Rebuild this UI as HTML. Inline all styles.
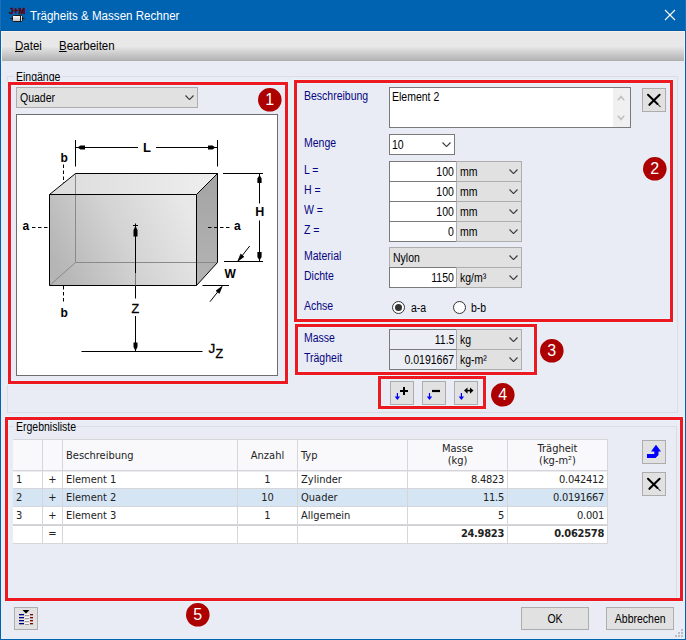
<!DOCTYPE html>
<html><head><meta charset="utf-8">
<title>Trägheits &amp; Massen Rechner</title>
<style>
*{box-sizing:border-box;margin:0;padding:0}
html,body{width:686px;height:640px;overflow:hidden}
body{position:relative;background:#e9ecf4;font-family:"Liberation Sans",sans-serif;font-size:12.5px;color:#000}
.abs{position:absolute}
.s{display:inline-block;white-space:nowrap;transform:scaleX(.84);transform-origin:0 50%}
.sr{display:inline-block;white-space:nowrap;transform:scaleX(.84);transform-origin:100% 50%}
.sc{display:inline-block;white-space:nowrap;transform:scaleX(.84);transform-origin:50% 50%}
#title{left:0;top:0;width:686px;height:31px;background:#0063b1;border-bottom:1px solid #005aa6;border-left:1px solid #1a6fb8;border-right:1px solid #1a6fb8}
#title .t{left:29px;top:8.5px;color:#fff;font-size:12.5px;white-space:nowrap;transform:scaleX(.926);transform-origin:0 50%}
#menu{left:1px;top:31px;width:684px;height:30px;background:linear-gradient(#e8e8e8 0%,#e8e8e8 50%,#e0e0e0 56%,#b4b4b4 97%,#aaaaaa 100%);border:1px solid #f7f3ec;border-bottom:none}
#menu span{position:absolute;top:7px;font-size:12.5px;white-space:nowrap;transform:scaleX(.92);transform-origin:0 50%}
.bl{left:0;top:31px;width:1px;height:609px;background:#0063b1}
.br{left:685px;top:31px;width:1px;height:609px;background:#0063b1}
.bb{left:0;top:639px;width:686px;height:1px;background:#0063b1}
.grp{border:1px solid #dcdde2}
.red{border:3px solid #ed1820;box-shadow:0 0 0 1px rgba(230,247,253,.75),inset 0 0 0 1px rgba(230,247,253,.75)}
.circ{width:23.6px;height:23.6px;border-radius:50%;background:#ad0000;color:#fff;font-size:16px;text-align:center;line-height:24px}
.lbl{color:#050582;white-space:nowrap}
.inp{background:#fff;border:1px solid #7a7a7a;height:21px;text-align:right;line-height:20px;padding-right:2px}
.ro{background:#eceef5}
.cmb{background:#e1e1e1;border:1px solid #adadad;height:21px;line-height:20px;padding-left:3px}
.btn{background:#e1e1e1;border:1px solid #adadad}
.chev{position:absolute;right:3.5px;top:6.9px;width:9px;height:5.5px}
#grid{font-family:"DejaVu Sans Condensed","DejaVu Sans",sans-serif;font-size:11px;color:#222}
#grid .hl{left:0;width:595px;height:1px;background:#d6d6da}
#grid .vl{top:0;width:1px;height:105px;background:#d6d6da}
#grid .c{white-space:nowrap;overflow:hidden}
</style></head><body>
<div id="title" class="abs">
<span class="abs" style="left:7.8px;top:6.3px;font-size:9.8px;font-weight:bold;color:#5a0410;-webkit-text-stroke:0.5px #5a0410;line-height:10px;white-space:nowrap;transform:scaleX(.84);transform-origin:0 0">J+M</span>
<svg class="abs" style="left:8px;top:14px" width="17" height="9" viewBox="9 14 17 9"><path d="M10 18.5 H12 M22.5 18.5 H24.5" stroke="#222" stroke-width="1"/><defs><linearGradient id="mg" x1="0" y1="0" x2="0" y2="1"><stop offset="0" stop-color="#fff"/><stop offset="1" stop-color="#bdbdbd"/></linearGradient></defs><rect x="12.5" y="15.5" width="10" height="6" rx="1" fill="url(#mg)" stroke="#1a1a1a" stroke-width="1"/><path d="M20.5 15.5 V21.5" stroke="#1a1a1a" stroke-width="1"/></svg>
<span class="abs t">Trägheits &amp; Massen Rechner</span>
<svg class="abs" style="left:663px;top:9px" width="12" height="12" viewBox="0 0 12 12"><path d="M1 1 L11 11 M11 1 L1 11" stroke="#fff" stroke-width="1.1" fill="none"/></svg>
</div>
<div id="menu" class="abs"><span style="left:13px"><u>D</u>atei</span><span style="left:57px"><u>B</u>earbeiten</span></div>
<div class="abs bl"></div><div class="abs br"></div><div class="abs bb"></div>
<div class="abs grp" style="left:7px;top:76px;width:671px;height:337px"></div>
<div class="abs" style="left:14px;top:70px;width:48px;height:14px;padding:0 2px;background:#e9ecf4"><span class="s">Eingänge</span></div>
<div class="abs cmb" style="left:16px;top:87px;width:182px;"><span class="s">Quader</span><svg class="chev" viewBox="0 0 9 5.5"><path d="M0.5 0.5 L4.5 4.6 L8.5 0.5" fill="none" stroke="#3c3c3c" stroke-width="1.15"/></svg></div>
<div class="abs" id="dia" style="left:16px;top:114px;width:262px;height:262px;background:#fff;border:1px solid #6e6e6e"></div>
<svg class="abs" style="left:17px;top:115px" width="260" height="260" viewBox="17 115 260 260" font-family="Liberation Sans, sans-serif">
<defs>
<linearGradient id="gf" x1="0" y1="0.65" x2="1" y2="0.35"><stop offset="0" stop-color="#b5b5b5"/><stop offset="0.5" stop-color="#d3d3d3"/><stop offset="1" stop-color="#e8e8e8"/></linearGradient>
<linearGradient id="gt" x1="0" y1="0" x2="1" y2="0"><stop offset="0" stop-color="#dcdcdc"/><stop offset="1" stop-color="#eeeeee"/></linearGradient>
<linearGradient id="gr" x1="0" y1="0" x2="0" y2="1"><stop offset="0" stop-color="#a4a4a4"/><stop offset="1" stop-color="#b4b4b4"/></linearGradient>
</defs>
<!-- box faces -->
<polygon points="49.5,194.5 196.5,194.5 196.5,285.5 49.5,285.5" fill="url(#gf)"/>
<polygon points="49.5,194.5 75.5,173.5 217.5,173.5 196.5,194.5" fill="url(#gt)"/>
<polygon points="196.5,194.5 217.5,173.5 217.5,262.5 196.5,285.5" fill="url(#gr)"/>
<!-- hidden edges -->
<path d="M75.5 173.5 V262.5 H217.5 M75.5 262.5 L49.5 285.5" fill="none" stroke="#8a8a8a" stroke-width="1"/>
<!-- visible edges -->
<path d="M49.5 194.5 H196.5 V285.5 H49.5 Z M49.5 194.5 L75.5 173.5 H217.5 V262.5 L196.5 285.5 M196.5 194.5 L217.5 173.5" fill="none" stroke="#000" stroke-width="1" stroke-linejoin="round"/>
<!-- L dimension -->
<path d="M75.5 140 V166.5 M217.5 140 V166.5 M76 147.5 H138 M156 147.5 H217" stroke="#000" stroke-width="1" fill="none"/>
<polygon points="77.5,147.5 80.5,145.4 85,145.4 85,149.6 80.5,149.6" fill="#000"/>
<polygon points="215.5,147.5 212.5,145.4 208,145.4 208,149.6 212.5,149.6" fill="#000"/>
<text x="143" y="151.5" font-size="13" font-weight="bold">L</text>
<!-- H dimension -->
<path d="M223 173.5 H263 M224 261.5 H263 M259.5 174 V203.5 M259.5 220.5 V261" stroke="#000" stroke-width="1" fill="none"/>
<polygon points="259.5,175 257.4,178.5 257.4,183 261.6,183 261.6,178.5" fill="#000"/>
<polygon points="259.5,260.5 257.4,257 257.4,252 261.6,252 261.6,257" fill="#000"/>
<text x="255.2" y="216.3" font-size="12.5" font-weight="bold">H</text>
<!-- W dimension -->
<path d="M249.7 246 L238 261 M202.5 285.5 H229 M210 301.7 L222 286.5" stroke="#000" stroke-width="1" fill="none"/>
<polygon points="238,261 243.9,256.7 240.7,254.2" fill="#000" stroke="#000" stroke-width="0.8" stroke-linejoin="round"/>
<polygon points="222,286.5 219.3,293.3 216.1,290.8" fill="#000" stroke="#000" stroke-width="0.8" stroke-linejoin="round"/>
<text x="224.5" y="277.5" font-size="12" font-weight="bold">W</text>
<!-- a axis -->
<path d="M32 227.5 H49 M208 227.5 H232" stroke="#000" stroke-width="1" stroke-dasharray="3.5 2.5" fill="none"/>
<text x="22.5" y="230" font-size="12" font-weight="bold">a</text>
<text x="234" y="230" font-size="12" font-weight="bold">a</text>
<!-- b axis -->
<path d="M63.5 164.5 V183 M63.5 286 V304" stroke="#000" stroke-width="1" stroke-dasharray="3.5 2.5" fill="none"/>
<text x="60.5" y="161.5" font-size="12" font-weight="bold">b</text>
<text x="60.5" y="316.5" font-size="12" font-weight="bold">b</text>
<!-- Z -->
<path d="M135.5 226 V273 M135.5 285.5 V298.5 M135.5 316 V351 M133 225.5 H138 M135.5 223.5 V228" stroke="#000" stroke-width="1" fill="none"/>
<path d="M135.5 273 V285.5" stroke="#777" stroke-width="1" fill="none"/>
<polygon points="135.5,226 133.5,230 133.5,236.5 137.5,236.5 137.5,230" fill="#000"/>
<polygon points="135.5,351 133.5,347 133.5,342.5 137.5,342.5 137.5,347" fill="#000"/>
<text x="131.5" y="312.5" font-size="12.5" stroke="#000" stroke-width="0.3">Z</text>
<path d="M81.5 351.5 H202.5" stroke="#000" stroke-width="1" fill="none"/>
<text x="208.5" y="353" font-size="13.5" stroke="#000" stroke-width="0.3">J</text>
<text x="215.5" y="357.5" font-size="12.5" stroke="#000" stroke-width="0.3">Z</text>
</svg>
<div class="abs lbl" style="left:304px;top:89px"><span class="s">Beschreibung</span></div>
<div class="abs" style="left:389px;top:87px;width:242px;height:41px;background:#fff;border:1px solid #7a7a7a"><span class="abs s" style="left:2px;top:2px">Element 2</span>
<div class="abs" style="right:0;top:0;width:17px;height:39px;background:#f0f0f0">
<svg class="abs" style="left:4px;top:7px" width="8" height="6" viewBox="0 0 8 6"><path d="M0.8 5.2 L4 1.6 L7.2 5.2" fill="none" stroke="#c2c2c2" stroke-width="1.7"/></svg>
<svg class="abs" style="left:4px;top:27px" width="8" height="6" viewBox="0 0 8 6"><path d="M0.8 0.8 L4 4.4 L7.2 0.8" fill="none" stroke="#c2c2c2" stroke-width="1.7"/></svg>
</div></div>
<div class="abs btn" style="left:642px;top:88px;width:24px;height:24px"><svg class="abs" style="left:4px;top:4px" width="15" height="15" viewBox="0 0 15 15"><path d="M1 1.8 L10.5 11" stroke="#000" stroke-width="2" stroke-linecap="round" fill="none"/><path d="M10.5 11 L13.3 13.8" stroke="#000" stroke-width="1" stroke-linecap="round" fill="none"/><path d="M12.6 1.8 L2.4 11.8" stroke="#000" stroke-width="2.1" stroke-linecap="round" fill="none"/></svg></div>
<div class="abs lbl" style="left:304px;top:136px"><span class="s">Menge</span></div>
<div class="abs cmb" style="left:389px;top:134px;width:66px;background:#fff;border-color:#7a7a7a;padding-left:2px"><span class="s">10</span><svg class="chev" viewBox="0 0 9 5.5"><path d="M0.5 0.5 L4.5 4.6 L8.5 0.5" fill="none" stroke="#3c3c3c" stroke-width="1.15"/></svg></div>
<div class="abs lbl" style="left:304px;top:163px"><span class="s">L =</span></div>
<div class="abs inp" style="left:389px;top:161px;width:68px"><span class="sr">100</span></div>
<div class="abs cmb" style="left:456px;top:161px;width:66px;"><span class="s">mm</span><svg class="chev" viewBox="0 0 9 5.5"><path d="M0.5 0.5 L4.5 4.6 L8.5 0.5" fill="none" stroke="#3c3c3c" stroke-width="1.15"/></svg></div>
<div class="abs lbl" style="left:304px;top:183px"><span class="s">H =</span></div>
<div class="abs inp" style="left:389px;top:181px;width:68px"><span class="sr">100</span></div>
<div class="abs cmb" style="left:456px;top:181px;width:66px;"><span class="s">mm</span><svg class="chev" viewBox="0 0 9 5.5"><path d="M0.5 0.5 L4.5 4.6 L8.5 0.5" fill="none" stroke="#3c3c3c" stroke-width="1.15"/></svg></div>
<div class="abs lbl" style="left:304px;top:203px"><span class="s">W =</span></div>
<div class="abs inp" style="left:389px;top:201px;width:68px"><span class="sr">100</span></div>
<div class="abs cmb" style="left:456px;top:201px;width:66px;"><span class="s">mm</span><svg class="chev" viewBox="0 0 9 5.5"><path d="M0.5 0.5 L4.5 4.6 L8.5 0.5" fill="none" stroke="#3c3c3c" stroke-width="1.15"/></svg></div>
<div class="abs lbl" style="left:304px;top:223px"><span class="s">Z =</span></div>
<div class="abs inp" style="left:389px;top:221px;width:68px"><span class="sr">0</span></div>
<div class="abs cmb" style="left:456px;top:221px;width:66px;"><span class="s">mm</span><svg class="chev" viewBox="0 0 9 5.5"><path d="M0.5 0.5 L4.5 4.6 L8.5 0.5" fill="none" stroke="#3c3c3c" stroke-width="1.15"/></svg></div>
<div class="abs lbl" style="left:304px;top:249px"><span class="s">Material</span></div>
<div class="abs cmb" style="left:389px;top:247px;width:133px;"><span class="s">Nylon</span><svg class="chev" viewBox="0 0 9 5.5"><path d="M0.5 0.5 L4.5 4.6 L8.5 0.5" fill="none" stroke="#3c3c3c" stroke-width="1.15"/></svg></div>
<div class="abs lbl" style="left:304px;top:269px"><span class="s">Dichte</span></div>
<div class="abs inp" style="left:389px;top:267px;width:68px"><span class="sr">1150</span></div>
<div class="abs cmb" style="left:456px;top:267px;width:66px;"><span class="s">kg/m³</span><svg class="chev" viewBox="0 0 9 5.5"><path d="M0.5 0.5 L4.5 4.6 L8.5 0.5" fill="none" stroke="#3c3c3c" stroke-width="1.15"/></svg></div>
<div class="abs lbl" style="left:304px;top:299px"><span class="s">Achse</span></div>
<div class="abs" style="left:392px;top:301px;width:13px;height:13px;border-radius:50%;border:1px solid #333;background:#fff"><div class="abs" style="left:2px;top:2px;width:7px;height:7px;border-radius:50%;background:#333"></div></div>
<div class="abs" style="left:411px;top:301px"><span class="s">a-a</span></div>
<div class="abs" style="left:453px;top:301px;width:13px;height:13px;border-radius:50%;border:1px solid #333;background:#fff"></div>
<div class="abs" style="left:471px;top:301px"><span class="s">b-b</span></div>
<div class="abs lbl" style="left:304px;top:331px"><span class="s">Masse</span></div>
<div class="abs inp ro" style="left:389px;top:329px;width:68px"><span class="sr">11.5</span></div>
<div class="abs cmb" style="left:456px;top:329px;width:66px;"><span class="s">kg</span><svg class="chev" viewBox="0 0 9 5.5"><path d="M0.5 0.5 L4.5 4.6 L8.5 0.5" fill="none" stroke="#3c3c3c" stroke-width="1.15"/></svg></div>
<div class="abs lbl" style="left:304px;top:351px"><span class="s">Trägheit</span></div>
<div class="abs inp ro" style="left:389px;top:349px;width:68px"><span class="sr">0.0191667</span></div>
<div class="abs cmb" style="left:456px;top:349px;width:66px;"><span class="s">kg-m²</span><svg class="chev" viewBox="0 0 9 5.5"><path d="M0.5 0.5 L4.5 4.6 L8.5 0.5" fill="none" stroke="#3c3c3c" stroke-width="1.15"/></svg></div>
<div class="abs btn" style="left:390px;top:381px;width:24px;height:24px"></div>
<div class="abs btn" style="left:422px;top:381px;width:24px;height:24px"></div>
<div class="abs btn" style="left:454px;top:381px;width:24px;height:24px"></div>
<svg class="abs" style="left:384px;top:376px" width="100" height="34" viewBox="384 376 100 34">
<path d="M397.4 393 V399" stroke="#00f" stroke-width="1.2"/><path d="M394.7 396.5 H400.09999999999997 L397.4 400 Z" fill="#00f"/><path d="M429.5 393 V399" stroke="#00f" stroke-width="1.2"/><path d="M426.8 396.5 H432.2 L429.5 400 Z" fill="#00f"/><path d="M461.4 393 V399" stroke="#00f" stroke-width="1.2"/><path d="M458.7 396.5 H464.09999999999997 L461.4 400 Z" fill="#00f"/>
<path d="M400 391 H408 M404 387 V395" stroke="#000" stroke-width="2" fill="none"/>
<path d="M432 391 H440" stroke="#000" stroke-width="2.2" fill="none"/>
<path d="M466 390.6 H472" stroke="#000" stroke-width="1.6" fill="none"/><path d="M464 390.6 L467.5 387.4 V393.8 Z M473.5 390.6 L470 387.4 V393.8 Z" fill="#000"/>
</svg>
<div class="abs grp" style="left:8px;top:426px;width:669px;height:172px"></div>
<div class="abs" style="left:14px;top:420px;width:62px;height:14px;padding:0 2px;background:#e9ecf4"><span class="s">Ergebnisliste</span></div>
<div class="abs" id="grid" style="left:13px;top:439px;width:595px;height:105px;background:#fff">
<div class="abs" style="left:0;top:0;width:595px;height:31px;background:#f9f9fc"></div>
<div class="abs" style="left:0;top:49px;width:595px;height:18px;background:#d5e5f4"></div>
<div class="abs hl" style="top:0px"></div>
<div class="abs hl" style="top:31px"></div>
<div class="abs hl" style="top:49px"></div>
<div class="abs hl" style="top:67px"></div>
<div class="abs hl" style="top:85px"></div>
<div class="abs hl" style="top:104px"></div>
<div class="abs hl" style="top:86px;background:#d0d0d4"></div>
<div class="abs hl" style="top:32px;background:#ececf0"></div>
<div class="abs vl" style="left:29px"></div>
<div class="abs vl" style="left:49px"></div>
<div class="abs vl" style="left:224px"></div>
<div class="abs vl" style="left:284px"></div>
<div class="abs vl" style="left:394px"></div>
<div class="abs vl" style="left:494px"></div>
<div class="abs vl" style="left:594px"></div>
<div class="abs c" style="left:50px;top:1px;width:174px;height:31px;line-height:31px;text-align:left;padding-left:3px;">Beschreibung</div>
<div class="abs c" style="left:225px;top:1px;width:59px;height:31px;line-height:31px;text-align:center;">Anzahl</div>
<div class="abs c" style="left:285px;top:1px;width:109px;height:31px;line-height:31px;text-align:left;padding-left:3px;">Typ</div>
<div class="abs c" style="left:395px;top:4px;width:99px;text-align:center;line-height:12px">Masse<br>(kg)</div>
<div class="abs c" style="left:495px;top:4px;width:99px;text-align:center;line-height:12px">Trägheit<br>(kg-m²)</div>
<div class="abs c" style="left:1px;top:32px;width:28px;height:17px;line-height:17px;text-align:left;padding-left:2px;">1</div>
<div class="abs c" style="left:30px;top:32px;width:19px;height:17px;line-height:17px;text-align:center;">+</div>
<div class="abs c" style="left:50px;top:32px;width:174px;height:17px;line-height:17px;text-align:left;padding-left:3px;">Element 1</div>
<div class="abs c" style="left:225px;top:32px;width:59px;height:17px;line-height:17px;text-align:center;">1</div>
<div class="abs c" style="left:285px;top:32px;width:109px;height:17px;line-height:17px;text-align:left;padding-left:3px;">Zylinder</div>
<div class="abs c" style="left:395px;top:32px;width:99px;height:17px;line-height:17px;text-align:right;padding-right:3px;letter-spacing:-0.28px;">8.4823</div>
<div class="abs c" style="left:495px;top:32px;width:99px;height:17px;line-height:17px;text-align:right;padding-right:3px;letter-spacing:-0.28px;">0.042412</div>
<div class="abs c" style="left:1px;top:50px;width:28px;height:17px;line-height:17px;text-align:left;padding-left:2px;">2</div>
<div class="abs c" style="left:30px;top:50px;width:19px;height:17px;line-height:17px;text-align:center;">+</div>
<div class="abs c" style="left:50px;top:50px;width:174px;height:17px;line-height:17px;text-align:left;padding-left:3px;">Element 2</div>
<div class="abs c" style="left:225px;top:50px;width:59px;height:17px;line-height:17px;text-align:center;">10</div>
<div class="abs c" style="left:285px;top:50px;width:109px;height:17px;line-height:17px;text-align:left;padding-left:3px;">Quader</div>
<div class="abs c" style="left:395px;top:50px;width:99px;height:17px;line-height:17px;text-align:right;padding-right:3px;letter-spacing:-0.28px;">11.5</div>
<div class="abs c" style="left:495px;top:50px;width:99px;height:17px;line-height:17px;text-align:right;padding-right:3px;letter-spacing:-0.28px;">0.0191667</div>
<div class="abs c" style="left:1px;top:68px;width:28px;height:17px;line-height:17px;text-align:left;padding-left:2px;">3</div>
<div class="abs c" style="left:30px;top:68px;width:19px;height:17px;line-height:17px;text-align:center;">+</div>
<div class="abs c" style="left:50px;top:68px;width:174px;height:17px;line-height:17px;text-align:left;padding-left:3px;">Element 3</div>
<div class="abs c" style="left:225px;top:68px;width:59px;height:17px;line-height:17px;text-align:center;">1</div>
<div class="abs c" style="left:285px;top:68px;width:109px;height:17px;line-height:17px;text-align:left;padding-left:3px;">Allgemein</div>
<div class="abs c" style="left:395px;top:68px;width:99px;height:17px;line-height:17px;text-align:right;padding-right:3px;letter-spacing:-0.28px;">5</div>
<div class="abs c" style="left:495px;top:68px;width:99px;height:17px;line-height:17px;text-align:right;padding-right:3px;letter-spacing:-0.28px;">0.001</div>
<div class="abs c" style="left:30px;top:86px;width:19px;height:18px;line-height:18px;text-align:center;">=</div>
<div class="abs c" style="left:395px;top:86px;width:99px;height:18px;line-height:18px;text-align:right;padding-right:3px;font-weight:bold;letter-spacing:-0.28px;">24.9823</div>
<div class="abs c" style="left:495px;top:86px;width:99px;height:18px;line-height:18px;text-align:right;padding-right:3px;font-weight:bold;letter-spacing:-0.28px;">0.062578</div>
</div>
<div class="abs btn" style="left:642px;top:440px;width:24px;height:24px"><svg class="abs" style="left:0;top:0" width="22" height="22" viewBox="643 441 22 22"><path d="M647 454 H654.3 V451.4 H651 L656 444.8 L661 451.4 H658.5 V455 L655.5 458 H647 Z" fill="#00f"/></svg></div>
<div class="abs btn" style="left:642px;top:472px;width:24px;height:24px"><svg class="abs" style="left:4px;top:4px" width="15" height="15" viewBox="0 0 15 15"><path d="M1 1.8 L10.5 11" stroke="#000" stroke-width="2" stroke-linecap="round" fill="none"/><path d="M10.5 11 L13.3 13.8" stroke="#000" stroke-width="1" stroke-linecap="round" fill="none"/><path d="M12.6 1.8 L2.4 11.8" stroke="#000" stroke-width="2.1" stroke-linecap="round" fill="none"/></svg></div>
<div class="abs btn" style="left:14px;top:607px;width:24px;height:23px"><svg class="abs" style="left:0;top:0" width="22" height="21" viewBox="15 608 22 21" shape-rendering="crispEdges"><path d="M22.5 610 H29.5 L26 613.5 Z" fill="#000" shape-rendering="auto"/><rect x="19" y="614" width="5" height="1" fill="#00008b"/><rect x="19" y="615" width="5" height="1" fill="#9a9ab0"/><rect x="25" y="614" width="4" height="1" fill="#fff"/><rect x="25" y="615" width="4" height="1" fill="#999"/><rect x="30" y="614" width="3" height="1" fill="#8b0000"/><rect x="30" y="615" width="3" height="1" fill="#b09a9a"/><rect x="19" y="617" width="5" height="1" fill="#00008b"/><rect x="19" y="618" width="5" height="1" fill="#9a9ab0"/><rect x="25" y="617" width="4" height="1" fill="#fff"/><rect x="25" y="618" width="4" height="1" fill="#999"/><rect x="30" y="617" width="3" height="1" fill="#8b0000"/><rect x="30" y="618" width="3" height="1" fill="#b09a9a"/><rect x="19" y="620" width="5" height="1" fill="#00008b"/><rect x="19" y="621" width="5" height="1" fill="#9a9ab0"/><rect x="25" y="620" width="4" height="1" fill="#fff"/><rect x="25" y="621" width="4" height="1" fill="#999"/><rect x="30" y="620" width="3" height="1" fill="#8b0000"/><rect x="30" y="621" width="3" height="1" fill="#b09a9a"/><rect x="19" y="623" width="5" height="1" fill="#00008b"/><rect x="19" y="624" width="5" height="1" fill="#9a9ab0"/><rect x="25" y="623" width="4" height="1" fill="#fff"/><rect x="25" y="624" width="4" height="1" fill="#999"/><rect x="30" y="623" width="3" height="1" fill="#8b0000"/><rect x="30" y="624" width="3" height="1" fill="#b09a9a"/></svg></div>
<div class="abs btn" style="left:521px;top:607px;width:68px;height:23px;text-align:center;line-height:22px"><span class="sc">OK</span></div>
<div class="abs btn" style="left:606px;top:607px;width:68px;height:23px;text-align:center;line-height:22px"><span class="sc">Abbrechen</span></div>
<svg class="abs" style="left:672px;top:626px" width="12" height="12" viewBox="0 0 12 12" shape-rendering="crispEdges"><rect x="9" y="9" width="2" height="2" fill="#b8bcc6"/><rect x="6" y="9" width="2" height="2" fill="#b8bcc6"/><rect x="3" y="9" width="2" height="2" fill="#b8bcc6"/><rect x="9" y="6" width="2" height="2" fill="#b8bcc6"/><rect x="6" y="6" width="2" height="2" fill="#b8bcc6"/><rect x="9" y="3" width="2" height="2" fill="#b8bcc6"/></svg>
<div class="abs red" style="left:8px;top:82px;width:280px;height:302px"></div>
<div class="abs red" style="left:294px;top:80px;width:379px;height:242px"></div>
<div class="abs red" style="left:295px;top:324px;width:242px;height:51px"></div>
<div class="abs red" style="left:378px;top:376px;width:108px;height:33px"></div>
<div class="abs red" style="left:5px;top:417px;width:678px;height:184px"></div>
<svg class="abs" style="left:258.1px;top:88.2px" width="23.6" height="23.6" viewBox="0 0 118 118"><circle cx="59" cy="59" r="59" fill="#ad0000"/><text x="59" y="87.5" font-size="80" text-anchor="middle" fill="#fff" font-family="Liberation Sans, sans-serif">1</text></svg>
<svg class="abs" style="left:643.1px;top:157.2px" width="23.6" height="23.6" viewBox="0 0 118 118"><circle cx="59" cy="59" r="59" fill="#ad0000"/><text x="59" y="87.5" font-size="80" text-anchor="middle" fill="#fff" font-family="Liberation Sans, sans-serif">2</text></svg>
<svg class="abs" style="left:540.1px;top:339.2px" width="23.6" height="23.6" viewBox="0 0 118 118"><circle cx="59" cy="59" r="59" fill="#ad0000"/><text x="59" y="87.5" font-size="80" text-anchor="middle" fill="#fff" font-family="Liberation Sans, sans-serif">3</text></svg>
<svg class="abs" style="left:491.1px;top:383.2px" width="23.6" height="23.6" viewBox="0 0 118 118"><circle cx="59" cy="59" r="59" fill="#ad0000"/><text x="59" y="87.5" font-size="80" text-anchor="middle" fill="#fff" font-family="Liberation Sans, sans-serif">4</text></svg>
<svg class="abs" style="left:186.1px;top:603.2px" width="23.6" height="23.6" viewBox="0 0 118 118"><circle cx="59" cy="59" r="59" fill="#ad0000"/><text x="59" y="87.5" font-size="80" text-anchor="middle" fill="#fff" font-family="Liberation Sans, sans-serif">5</text></svg>
</body></html>
